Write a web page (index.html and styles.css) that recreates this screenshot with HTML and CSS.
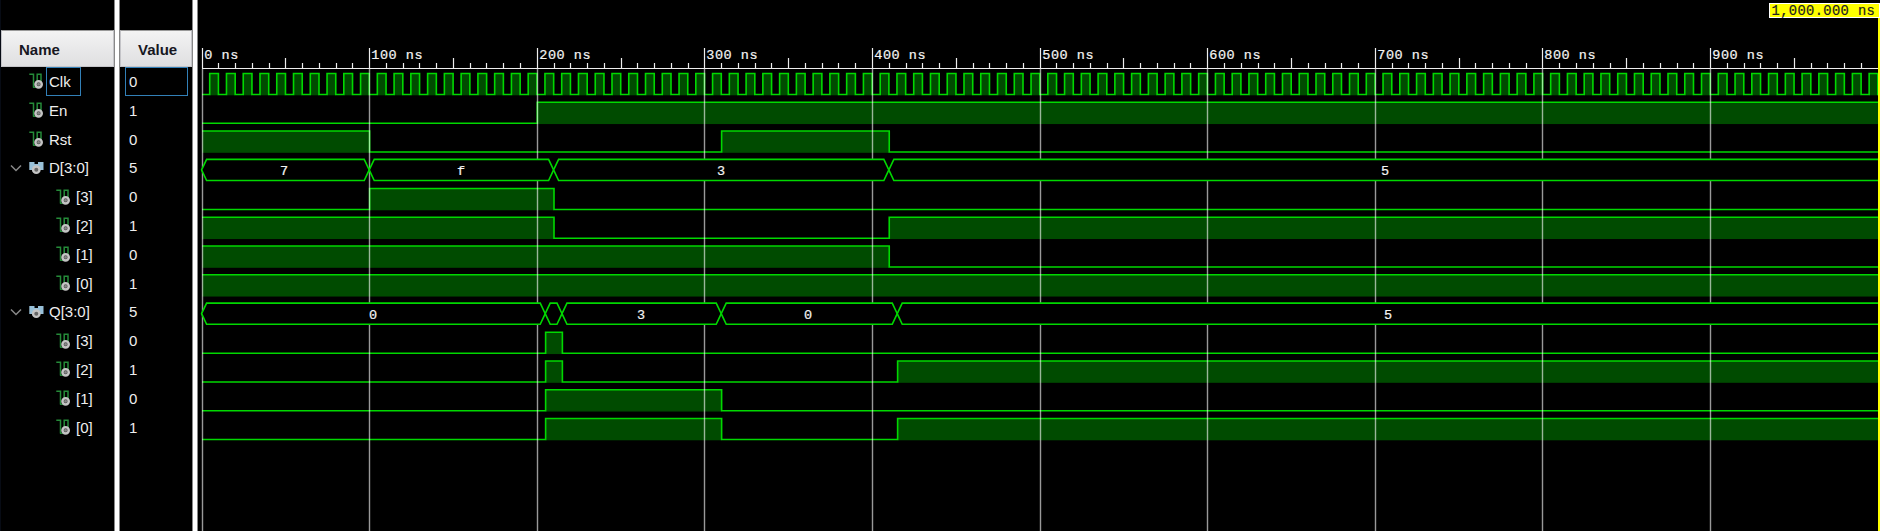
FILE: index.html
```
<!DOCTYPE html>
<html lang="en">
<head>
<meta charset="utf-8">
<title>Waveform</title>
<link rel="stylesheet" href="styles.css">
</head>
<body>
<svg class="defs" aria-hidden="true">
  <symbol id="wire" viewBox="0 0 14 16">
    <path d="M0.300 1.200H4.500V14.500M8.200 13V1.200H12V9" fill="none" stroke="#258b39" stroke-width="1.500"/>
    <path d="M4 14.300H8" stroke="#258b39" stroke-width="1.300"/>
    <circle cx="9.600" cy="11.300" r="3.200" fill="#555" stroke="#c4c4c4" stroke-width="2.400"/>
    <circle cx="9.600" cy="11.300" r="1.200" fill="#888"/>
  </symbol>
  <symbol id="bus" viewBox="0 0 16 14">
    <path d="M.3 1H5.500V3H9V1H14.500V9H11L7.500 6L4 9H.3Z" fill="#98c0d8"/>
    <circle cx="7.300" cy="8.700" r="3.200" fill="#666" stroke="#c4c4c4" stroke-width="2.400"/>
  </symbol>
  <symbol id="chevron" viewBox="0 0 12 8">
    <path d="M1 1.500L6 6.500L11 1.500" fill="none" stroke="#888" stroke-width="1.500"/>
  </symbol>
</svg>
<main class="viewer">
  <section class="column names"><header>Name</header><div class="rows" id="names"></div></section>
  <div class="divider"></div>
  <section class="column values"><header>Value</header><div class="rows" id="values"></div></section>
  <div class="divider"></div>
  <section class="waves"><svg id="wave" width="1682" height="531" viewBox="198 0 1682 531"></svg></section>
</main>
<script src="wave.js"></script>
</body>
</html>
```
FILE: styles.css
```
body { margin: 0; background: #000; color: #eee; font: 15px "Liberation Sans", Arial, sans-serif; overflow: hidden; }
.defs { position: absolute; width: 0; height: 0; }
.viewer { display: flex; width: 1880px; height: 531px; }
.column { display: flex; flex: none; flex-direction: column; box-sizing: border-box; padding-top: 30px; }
.names { width: 114px; border-left: 1px solid #070b14; }
.values { width: 72px; }
.column header { box-sizing: border-box; flex: none; height: 37px; padding-left: 17px; line-height: 37px; font-weight: bold; color: #17171f; background: linear-gradient(#f3f3f3, #dfdfe1); border: 1px solid #c4c4c8; border-top-color: #999; }
.divider { box-sizing: border-box; flex: none; width: 6px; background: #fff; border-left: 1px solid #888; border-right: 1px solid #888; }
.row { display: flex; align-items: center; height: 28.8px; box-sizing: border-box; }
.names .row { padding-left: 9px; }
.names .child { padding-left: 36px; }
.toggle { display: flex; width: 19px; }
.toggle svg { width: 12px; height: 8px; }
.icon { width: 14px; height: 16px; margin-right: 3px; }
.icon-bus { width: 16px; height: 14px; margin-right: 1px; }
.label { box-sizing: border-box; height: 28.8px; padding: 0 2px; border: 1px solid transparent; line-height: 27px; }
.value { box-sizing: border-box; width: 63px; height: 28.8px; margin-left: 5px; padding-left: 3px; border: 1px solid transparent; line-height: 27px; }
.selected { border-color: #3280b8; }
.names .selected { width: 35px; }
.waves { flex: none; width: 1682px; }
.waves svg { display: block; }
.scale { font: 13.5px "Liberation Mono", monospace; letter-spacing: .54px; fill: #f4f4f4; stroke: #f4f4f4; stroke-width: .2; }
.bus-value { font: 13.5px "Liberation Mono", monospace; fill: #f4f4f4; stroke: #f4f4f4; stroke-width: .2; text-anchor: middle; }
.cursor-text { font: 13.8px "Liberation Mono", monospace; letter-spacing: .36px; fill: #222; stroke: #222; stroke-width: .2; }
.fill { fill: #004b00; }
.line { fill: none; stroke: #00d800; stroke-width: 1.6; }
.bus-fill { fill: #000; }
.grid { stroke: #fff; stroke-opacity: .6; stroke-width: 1.4; }
.tick { stroke: #eee; stroke-width: 1.2; }
```
FILE: wave.js
```
const signals = [
  { name: 'Clk', value: 0, clock: true },
  { name: 'En', value: 1, high: [[200, 1000]] },
  { name: 'Rst', value: 0, high: [[0, 100], [310, 410]] },
  { name: 'D[3:0]', value: 5, bus: [[0, 100, '7', 284], [100, 210, 'f', 461], [210, 410, '3', 721], [410, 1000, '5', 1385]] },
  { name: '[3]', value: 0, child: true, high: [[100, 210]] },
  { name: '[2]', value: 1, child: true, high: [[0, 210], [410, 1000]] },
  { name: '[1]', value: 0, child: true, high: [[0, 410]] },
  { name: '[0]', value: 1, child: true, high: [[0, 1000]] },
  { name: 'Q[3:0]', value: 5, bus: [[0, 205, '0', 373], [205, 215, '', 0], [215, 310, '3', 641], [310, 415, '0', 808], [415, 1000, '5', 1388]] },
  { name: '[3]', value: 0, child: true, high: [[205, 215]] },
  { name: '[2]', value: 1, child: true, high: [[205, 215], [415, 1000]] },
  { name: '[1]', value: 0, child: true, high: [[205, 310]] },
  { name: '[0]', value: 1, child: true, high: [[205, 310], [415, 1000]] }
];
const x = t => 202 + t * 1.6762;
const end = x(1000);
let waves = '', grid = '', buses = '', names = '', values = '';

signals.forEach((s, i) => {
  const top = 73.5 + i * 28.75, low = top + 21;
  const selected = i === 0 ? ' selected' : '';
  const icon = s.bus
    ? '<svg class="icon-bus"><use href="#bus"/></svg>'
    : '<svg class="icon"><use href="#wire"/></svg>';
  const toggle = s.bus ? '<svg><use href="#chevron"/></svg>' : '';
  names += `<div class="row${s.child ? ' child' : ''}"><span class="toggle">${toggle}</span>${icon}<span class="label${selected}">${s.name}</span></div>`;
  values += `<div class="row"><span class="value${selected}">${s.value}</span></div>`;
  if (s.bus) {
    const bt = top - 0.4, bl = bt + 21.2, mid = bt + 10.6;
    s.bus.forEach(([a, b, text, tx]) => {
      const l = x(a) - 0.4, r = x(b) - 0.4;
      const last = b === 1000;
      const d = `M${l} ${mid}L${l + 5} ${bt}H${last ? end : r - 5}` + (last ? `V${bl}` : `L${r} ${mid}L${r - 5} ${bl}`) + `H${l + 5}Z`;
      buses += `<path class="bus-fill" d="${d}"/>`;
      buses += `<path class="line" d="${last ? `M${end} ${bt}H${l + 5}L${l} ${mid}L${l + 5} ${bl}H${end}` : d}"/>`;
      if (text) buses += `<text class="bus-value" x="${tx}" y="${mid + 4.8}">${text}</text>`;
    });
    return;
  }
  const high = s.clock ? Array.from({ length: 100 }, (_, n) => [n * 10 + 4.6, n * 10 + 9.8]) : s.high;
  let d = '', level = 0;
  high.forEach(([a, b]) => {
    waves += `<rect class="fill" x="${x(a)}" y="${top}" width="${x(b) - x(a)}" height="21.8"/>`;
    d += d ? `H${x(a)}V${top}H${x(b)}` : a === 0 ? `M${x(0)} ${top}H${x(b)}` : `M${x(0)} ${low}H${x(a)}V${top}H${x(b)}`;
    if (b < 1000) d += `V${low}`;
  });
  if (high[high.length - 1][1] < 1000) d += `H${end}`;
  waves += `<path class="line" d="${d}"/>`;
});

for (let t = 0; t < 1000; t += 10) {
  const major = t % 100 === 0, px = Math.floor(x(t)) + 0.5;
  if (major) {
    grid += `<path class="grid" d="M${px} 69V531"/><path class="tick" d="M${px} 48V68.5"/><text class="scale" x="${px + 1.8}" y="59">${t} ns</text>`;
  } else {
    grid += `<path class="tick" d="M${px} ${t % 50 === 0 ? 58 : 63}V68.5"/>`;
  }
}
grid += `<path class="tick" d="M202 68.500H${end}"/>`;
const cursor = `<path d="M1879 17V531" stroke="#ff0" stroke-width="2"/>
<rect x="1769.500" y="3.500" width="110" height="14" fill="#ff0" stroke="#fff"/>
<text class="cursor-text" x="1771.500" y="15.300">1,000.000 ns</text>`;

document.getElementById('names').innerHTML = names;
document.getElementById('values').innerHTML = values;
document.getElementById('wave').innerHTML = waves + grid + buses + cursor;
```
